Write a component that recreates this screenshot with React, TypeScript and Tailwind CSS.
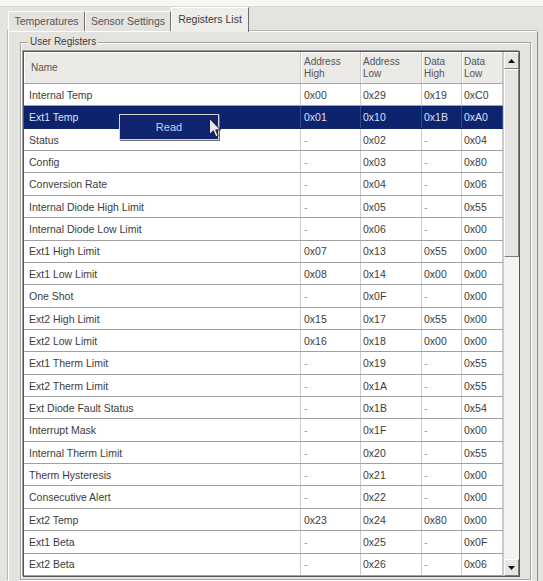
import React from "react";

type Reg = [string, string, string, string, string];

const regs: Reg[] = [
  ["Internal Temp", "0x00", "0x29", "0x19", "0xC0"],
  ["Ext1 Temp", "0x01", "0x10", "0x1B", "0xA0"],
  ["Status", "-", "0x02", "-", "0x04"],
  ["Config", "-", "0x03", "-", "0x80"],
  ["Conversion Rate", "-", "0x04", "-", "0x06"],
  ["Internal Diode High Limit", "-", "0x05", "-", "0x55"],
  ["Internal Diode Low Limit", "-", "0x06", "-", "0x00"],
  ["Ext1 High Limit", "0x07", "0x13", "0x55", "0x00"],
  ["Ext1 Low Limit", "0x08", "0x14", "0x00", "0x00"],
  ["One Shot", "-", "0x0F", "-", "0x00"],
  ["Ext2 High Limit", "0x15", "0x17", "0x55", "0x00"],
  ["Ext2 Low Limit", "0x16", "0x18", "0x00", "0x00"],
  ["Ext1 Therm Limit", "-", "0x19", "-", "0x55"],
  ["Ext2 Therm Limit", "-", "0x1A", "-", "0x55"],
  ["Ext Diode Fault Status", "-", "0x1B", "-", "0x54"],
  ["Interrupt Mask", "-", "0x1F", "-", "0x00"],
  ["Internal Therm Limit", "-", "0x20", "-", "0x55"],
  ["Therm Hysteresis", "-", "0x21", "-", "0x00"],
  ["Consecutive Alert", "-", "0x22", "-", "0x00"],
  ["Ext2 Temp", "0x23", "0x24", "0x80", "0x00"],
  ["Ext1 Beta", "-", "0x25", "-", "0x0F"],
  ["Ext2 Beta", "-", "0x26", "-", "0x06"],
];

const colW = [
  "w-[277px] pl-[5px]",
  "w-[60px] pl-[3px]",
  "w-[61px] pl-[2px]",
  "w-[40px] pl-[2px]",
  "w-[41px] pl-[2px]",
];

function Tab({ label, w, active }: { label: string; w: string; active?: boolean }) {
  if (active) {
    return (
      <div
        className={`${w} h-[25px] -mb-px flex items-center justify-center bg-[#eeedea] border-t border-l border-t-white border-l-white border-r border-r-[#6f6f6f] text-[#3a3a3a]`}
      >
        <span className="-mt-[2px]">{label}</span>
      </div>
    );
  }
  return (
    <div
      className={`${w} h-[20px] flex items-center justify-center bg-[#e4e3df] border-t border-l border-t-white border-l-white border-r border-r-[#6f6f6f] text-[#555]`}
    >
      {label}
    </div>
  );
}

function ArrowBtn({ down }: { down?: boolean }) {
  return (
    <div className="h-[17px] shrink-0 flex items-center justify-center bg-[#e6e5e1] border border-t-white border-l-white border-r-[#7d7d7d] border-b-[#7d7d7d]">
      <svg width="7" height="4" viewBox="0 0 7 4">
        {down ? <path d="M0 0H7L3.5 4Z" fill="#111" /> : <path d="M0 4H7L3.5 0Z" fill="#111" />}
      </svg>
    </div>
  );
}

function Table() {
  return (
    <div className="mt-[4px] flex w-[497px] border border-[#555] shadow-[-1px_-1px_0_#9a9a9a]">
      <div className="flex flex-col w-[479px]">
        <div className="flex h-[32px] border-b border-[#a5a5a5] bg-[#ebeae6] text-[10px] leading-[12px] text-[#555]">
          <div className={`${colW[0]} flex items-center border-r border-[#c6c6c6] shadow-[inset_1px_1px_0_#fff]`}>
            <span className="pl-[2px]">Name</span>
          </div>
          {["Address\nHigh", "Address\nLow", "Data\nHigh", "Data\nLow"].map((h, i) => (
            <div
              key={h}
              className={`${colW[i + 1]} flex items-center whitespace-pre border-r border-[#c6c6c6] shadow-[inset_1px_1px_0_#fff]`}
            >
              {h}
            </div>
          ))}
        </div>
        <div className="flex flex-col h-[492px] bg-white">
          {regs.map((r, ri) => {
            const sel = ri === 1;
            return (
              <div
                key={r[0]}
                className={`flex flex-1 border-b ${sel ? "bg-[#0e236e] border-[#0e236e] text-[#dbe2f6]" : "border-[#a0a0a0]"}`}
              >
                {r.map((c, ci) => (
                  <div
                    key={ci}
                    className={`${colW[ci]} flex items-center pt-[1px] border-r ${
                      sel ? "border-[#34478a]" : "border-[#cdcdcd]"
                    } ${c === "-" && !sel ? "text-[#999]" : ""}`}
                  >
                    {c}
                  </div>
                ))}
              </div>
            );
          })}
        </div>
      </div>
      <div className="w-[17px] flex flex-col bg-[#f2f1ef] border-l border-[#c9c9c9]">
        <ArrowBtn />
        <div className="h-[188px] shrink-0 bg-[#e6e5e1] border border-t-white border-l-white border-r-[#7d7d7d] border-b-[#7d7d7d]" />
        <div className="flex-1 bg-[#f4f3f1]" />
        <ArrowBtn down />
      </div>
    </div>
  );
}

export default function App() {
  return (
    <div className="relative w-[543px] h-[581px] overflow-hidden bg-[#e4e3df] flex flex-col font-['Liberation_Sans',Arial,sans-serif] text-[10.5px] leading-none text-[#3c3c3c]">
      <div className="h-[7px] shrink-0 bg-[#f7f7f6] border-b border-[#d8d8d8]" />
      <div className="h-[24px] shrink-0 flex items-end pl-[8px] relative z-10">
        <Tab label="Temperatures" w="w-[77px]" />
        <Tab label="Sensor Settings" w="w-[86px]" />
        <Tab label="Registers List" w="w-[78px]" active />
      </div>
      <div className="flex-1 ml-[8px] mr-[5px] border-t border-l border-r border-t-white border-l-white border-r-[#8c8c8c] shadow-[-1px_-1px_0_#b5b5b5] pl-[11px] pt-[5px] flex flex-col">
        <fieldset className="w-[511px] border border-[#a3a3a3] shadow-[inset_1px_1px_0_#fff,1px_1px_0_#fff] pl-[2px] pb-[2px]">
          <legend className="ml-[5px] px-[2px] bg-[#e4e3df] text-[10px] text-[#3c3c3c]">User Registers</legend>
          <Table />
        </fieldset>
      </div>

      {/* context menu over the selected row */}
      <div className="absolute left-[119px] top-[114px] w-[100px] h-[26px] border border-[#d6d6d6] bg-[#11256f] shadow-[1px_1px_0_#6b6b6b] flex items-center justify-center text-[11px] text-[#c6d1f1]">
        Read
      </div>
      {/* mouse pointer */}
      <svg className="absolute left-[209px] top-[118px]" width="12" height="20" viewBox="0 0 12 20">
        <path d="M0.5 0.5V16.5L4.3 12.8L6.8 18.8L9.2 17.8L6.7 11.9H11.5Z" fill="#e8e8e8" stroke="#222" strokeWidth="1" />
      </svg>
    </div>
  );
}
